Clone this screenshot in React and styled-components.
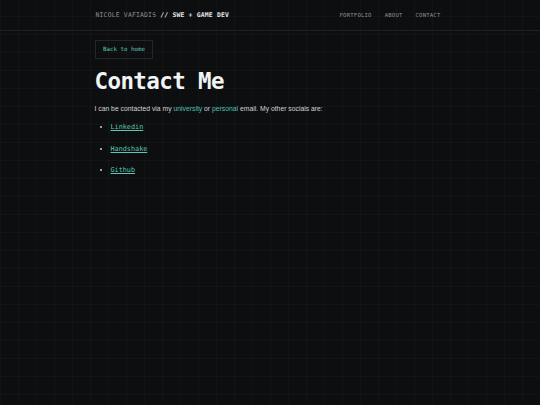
import styled, { createGlobalStyle } from "styled-components";

const GlobalStyle = createGlobalStyle`
  html, body {
    margin: 0;
    padding: 0;
    background: #0c0e10;
  }
  body {
    min-height: 405px;
    background-color: #0c0e10;
    background-image:
      linear-gradient(to right, rgba(255, 255, 255, 0.018) 1px, transparent 1px),
      linear-gradient(to bottom, rgba(255, 255, 255, 0.018) 1px, transparent 1px);
    background-size: 18px 18px;
    background-position: 0 -2px;
    color: #d4d6d8;
    font-family: "Liberation Sans", Arial, sans-serif;
  }
`;

const links = [
  { label: "Linkedin", href: "#" },
  { label: "Handshake", href: "#" },
  { label: "Github", href: "#" },
];

export default function App() {
  return (
    <>
      <GlobalStyle />
      <Header>
        <HeaderInner>
          <Logo>
            NICOLE VAFIADIS <strong>// SWE + GAME DEV</strong>
          </Logo>
          <Nav>
            <a href="#">PORTFOLIO</a>
            <a href="#">ABOUT</a>
            <a href="#">CONTACT</a>
          </Nav>
        </HeaderInner>
      </Header>
      <Main>
        <BackButton href="#">Back to home</BackButton>
        <Title>Contact Me</Title>
        <Intro>
          I can be contacted via my <Accent href="#">university</Accent> or{" "}
          <Accent href="#">personal</Accent> email. My other socials are:
        </Intro>
        <Socials>
          {links.map((l) => (
            <li key={l.label}>
              <a href={l.href}>{l.label}</a>
            </li>
          ))}
        </Socials>
      </Main>
    </>
  );
}

const Header = styled.header`
  height: 30px;
  border-bottom: 1px solid #1d2125;
`;

const HeaderInner = styled.div`
  width: 345px;
  height: 100%;
  margin: 0 auto;
  display: flex;
  align-items: center;
  justify-content: space-between;
  transform: translateX(-2px);
`;

const Logo = styled.div`
  font-family: "DejaVu Sans Mono", monospace;
  font-size: 6.4px;
  letter-spacing: 0.2px;
  color: #8a9096;
  strong {
    color: #e6e8ea;
    font-weight: bold;
  }
`;

const Nav = styled.nav`
  display: flex;
  gap: 13px;
  a {
    font-family: "DejaVu Sans Mono", monospace;
    font-size: 5.6px;
    letter-spacing: 0.2px;
    color: #8a9096;
    text-decoration: none;
  }
`;

const Main = styled.main`
  width: 345px;
  margin: 0 auto;
  padding-top: 6px;
  transform: translateX(-3px);
`;

const BackButton = styled.a`
  display: inline-block;
  box-sizing: border-box;
  height: 19px;
  line-height: 17px;
  padding: 0 7.5px;
  border: 1px solid #22272b;
  font-family: "DejaVu Sans Mono", monospace;
  font-size: 5.8px;
  color: #5cc6b3;
  text-decoration: none;
`;

const Title = styled.h1`
  margin: 7px 0 0;
  font-family: "DejaVu Sans Mono", monospace;
  font-size: 22.5px;
  font-weight: bold;
  letter-spacing: -0.6px;
  line-height: 30px;
  color: #f2f3f4;
`;

const Intro = styled.p`
  margin: 8px 0 0;
  font-size: 6.8px;
  line-height: 10px;
  color: #d0d3d6;
`;

const Accent = styled.a`
  color: #4fc1b0;
  text-decoration: none;
`;

const Socials = styled.ul`
  margin: 8px 0 0;
  padding-left: 16px;
  list-style: disc;
  font-size: 7px;
  li {
    line-height: 10px;
    margin-bottom: 11.5px;
    color: #c9ccd0;
  }
  a {
    font-family: "DejaVu Sans Mono", monospace;
    font-size: 6.8px;
    color: #5cc6b3;
    text-decoration: underline;
  }
`;
